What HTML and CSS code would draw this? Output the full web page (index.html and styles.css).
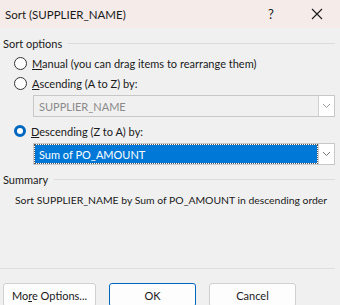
FILE: index.html
```html
<!DOCTYPE html>
<html lang="en">
<head>
    <meta charset="UTF-8">
    <title>Sort (SUPPLIER_NAME)</title>
    <link rel="stylesheet" href="styles.css">
</head>
<body>
    <div class="dialog">
        <div class="titlebar">
            <span class="title">Sort (SUPPLIER_NAME)</span>
            <span class="help">?</span>
            <span class="close">
                <svg width="12" height="12" viewBox="0 0 12 12"><path d="M1 1 L11 11 M11 1 L1 11" stroke="#1a1a1a" stroke-width="1.1" fill="none"/></svg>
            </span>
        </div>

        <div class="content">
            <div class="group-head">
                <span>Sort options</span>
                <div class="rule"></div>
            </div>

            <label class="radio-row">
                <span class="radio"></span>
                <span><u>M</u>anual (you can drag items to rearrange them)</span>
            </label>
            <label class="radio-row">
                <span class="radio"></span>
                <span><u>A</u>scending (A to Z) by:</span>
            </label>
            <div class="combo disabled">
                <span class="combo-text">SUPPLIER_NAME</span>
                <span class="combo-btn">
                    <svg width="9" height="6" viewBox="0 0 9 6"><path d="M1 1 L4.5 4.5 L8 1" stroke="#9a9a9a" stroke-width="1" fill="none"/></svg>
                </span>
            </div>

            <label class="radio-row">
                <span class="radio checked"></span>
                <span><u>D</u>escending (Z to A) by:</span>
            </label>
            <div class="combo">
                <span class="combo-text selected">Sum of PO_AMOUNT</span>
                <span class="combo-btn">
                    <svg width="9" height="6" viewBox="0 0 9 6"><path d="M1 1 L4.5 4.5 L8 1" stroke="#7a7a7a" stroke-width="1" fill="none"/></svg>
                </span>
            </div>

            <div class="group-head summary-head">
                <span>Summary</span>
                <div class="rule"></div>
            </div>
            <p class="summary">Sort SUPPLIER_NAME by Sum of PO_AMOUNT in descending order</p>
        </div>

        <div class="footer">
            <div class="buttons">
                <button class="btn wide">Mo<u>r</u>e Options...</button>
                <button class="btn default">OK</button>
                <button class="btn">Cancel</button>
            </div>
        </div>
    </div>
</body>
</html>
```

FILE: styles.css
```css
body {
    margin: 0;
    font-family: Lato, "Noto Sans", sans-serif;
    font-size: 11px;
    color: #1a1a1a;
    background-color: #f0f0f0;
    overflow: hidden;
}

.dialog {
    width: 340px;
    height: 305px;
    background-color: #f0f0f0;
}

.titlebar {
    height: 28px;
    display: flex;
    align-items: center;
    background-color: #f5ebe9;
    padding-left: 5px;
}

.title {
    flex: 1;
    font-size: 11.5px;
}

.help {
    width: 46px;
    font-size: 13px;
    text-align: center;
}

.close {
    width: 46px;
    display: flex;
    justify-content: center;
}

.content {
    padding: 5px 5px 0 3px;
    height: 235px;
}

.group-head {
    display: flex;
    align-items: center;
    gap: 6px;
    height: 20px;
    white-space: nowrap;
}

.rule {
    flex: 1;
    height: 1px;
    background-color: #dcdcdc;
}

.radio-row {
    display: flex;
    align-items: center;
    gap: 5px;
    height: 20px;
    padding-left: 11px;
    white-space: nowrap;
}

.radio {
    width: 11px;
    height: 11px;
    border: 1px solid #333;
    border-radius: 50%;
    background-color: #fff;
}

.radio.checked {
    width: 6px;
    height: 6px;
    border: 3.5px solid #0067c0;
}

.combo {
    display: flex;
    height: 20px;
    margin: 2px 0 4px 30px;
    border: 1px solid #c8c8c8;
    background-color: #fff;
}

.combo.disabled {
    background-color: #f0f0f0;
    color: #8a8a8a;
}

.combo-text {
    flex: 1;
    display: flex;
    align-items: center;
    padding-left: 4px;
    margin: 1px;
}

.combo-text.selected {
    background-color: #0078d7;
    color: #fff;
    outline: 1px dotted #555;
}

.combo-btn {
    width: 15px;
    display: flex;
    align-items: center;
    justify-content: center;
    background-color: #fff;
    border-left: 1px solid #d0d0d0;
}

.summary-head {
    margin-top: 2px;
}

.summary {
    margin: 5px 0 0 12px;
    font-size: 10.4px;
    white-space: nowrap;
}

.footer {
    border-top: 1px solid #dedede;
    margin-right: 5px;
    padding: 14px 0 0 3px;
}

.buttons {
    display: flex;
    gap: 13px;
}

.btn {
    font-family: inherit;
    font-size: 11px;
    color: #1a1a1a;
    width: 87px;
    height: 24px;
    white-space: nowrap;
    background-color: #fdfdfd;
    border: 1px solid #d0d0d0;
    border-radius: 3px;
}

.btn.wide {
    width: 93px;
}

.btn.default {
    border: 1px solid #0067c0;
}
```
